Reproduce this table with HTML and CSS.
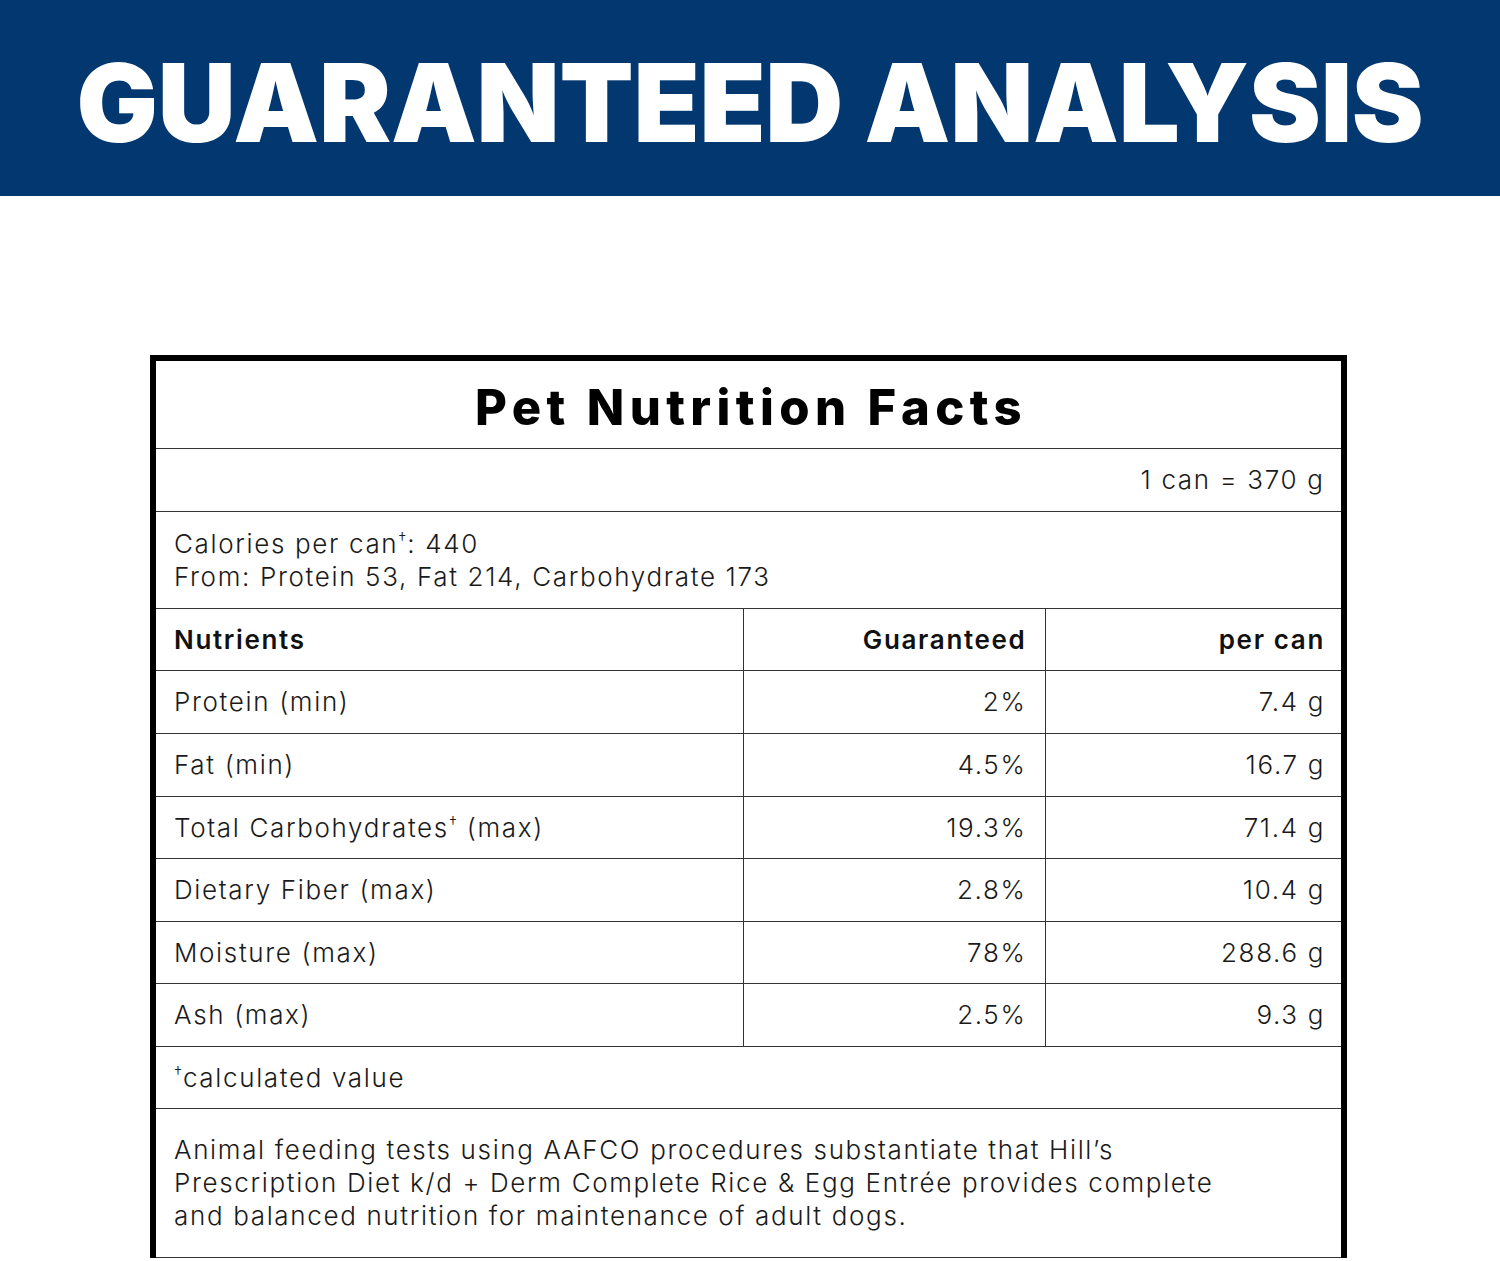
FILE: index.html
```html
<!DOCTYPE html>
<html lang="en">
<head>
<meta charset="utf-8">
<title>Guaranteed Analysis</title>
<link rel="stylesheet" href="styles.css">
</head>
<body>
<header class="banner">
  <h1 class="banner-title">GUARANTEED ANALYSIS</h1>
</header>
<main class="content">
  <table class="facts">
    <colgroup>
      <col class="c1"><col class="c2"><col class="c3">
    </colgroup>
    <tr class="r-title"><th colspan="3" class="title">Pet Nutrition Facts</th></tr>
    <tr class="h63"><td colspan="3" class="right">1 can = 370 g</td></tr>
    <tr class="r-cal"><td colspan="3">Calories per can<sup>†</sup>: 440<br>From: Protein 53, Fat 214, Carbohydrate 173</td></tr>
    <tr class="h62 head"><th class="left">Nutrients</th><th class="right">Guaranteed</th><th class="right">per can</th></tr>
    <tr class="h63"><td>Protein (min)</td><td class="right">2%</td><td class="right">7.4 g</td></tr>
    <tr class="h63"><td>Fat (min)</td><td class="right">4.5%</td><td class="right">16.7 g</td></tr>
    <tr class="h62"><td>Total Carbohydrates<sup>†</sup> (max)</td><td class="right">19.3%</td><td class="right">71.4 g</td></tr>
    <tr class="h63"><td>Dietary Fiber (max)</td><td class="right">2.8%</td><td class="right">10.4 g</td></tr>
    <tr class="h62"><td>Moisture (max)</td><td class="right">78%</td><td class="right">288.6 g</td></tr>
    <tr class="h63"><td>Ash (max)</td><td class="right">2.5%</td><td class="right">9.3 g</td></tr>
    <tr class="h62"><td colspan="3"><sup>†</sup>calculated value</td></tr>
    <tr class="r-stmt"><td colspan="3">Animal feeding tests using AAFCO procedures substantiate that Hill’s<br>Prescription Diet k/d + Derm Complete Rice &amp; Egg Entrée provides complete<br>and balanced nutrition for maintenance of adult dogs.</td></tr>
  </table>
</main>
</body>
</html>
```

FILE: styles.css
```css
html, body {
  margin: 0;
  padding: 0;
  background: #ffffff;
}
body {
  width: 1500px;
  font-family: "Inter", "Liberation Sans", sans-serif;
  color: #1a1a1a;
}
.banner {
  height: 196px;
  background: #02386f;
  display: flex;
  align-items: center;
  justify-content: center;
}
.banner-title {
  margin: 0;
  color: #ffffff;
  font-family: "Inter", sans-serif;
  font-weight: 900;
  font-size: 108px;
  line-height: 1;
  letter-spacing: -0.2px;
  padding-top: 10px;
}
.content {
  padding: 159px 0 0 150px;
}
.facts {
  width: 1197px;
  table-layout: fixed;
  border-collapse: collapse;
  border-top: 6px solid #000;
  border-left: 6px solid #000;
  border-right: 6px solid #000;
  border-bottom: 1px solid #333;
}
.c1 { width: 588px; }
.c2 { width: 300px; }
.c3 { width: 297px; }
.facts td, .facts th {
  border-top: 1px solid #333;
  padding: 0 18px;
  font-size: 26px;
  font-weight: 300;
  letter-spacing: 1.65px;
  line-height: 33px;
  text-align: left;
  vertical-align: middle;
}
.facts tr.r-title th { border-top: 0; }
.facts td + td, .facts th + th {
  border-left: 1px solid #333;
}
.facts .right { text-align: right; padding-right: 18px; }
.facts td + td.right, .facts th + th.right { padding-right: 18.5px; }
.facts td + td + td.right, .facts th + th + th.right { padding-right: 16px; }
.facts td[colspan].right { padding-right: 16.5px; }
.r-title { height: 90px; }
.h62 { height: 62px; }
.h63 { height: 63px; }
.r-cal { height: 97px; }
.r-stmt { height: 149px; }
.facts th.title {
  text-align: center;
  font-size: 49px;
  font-weight: 800;
  letter-spacing: 5.4px;
  color: #000;
  padding-top: 6px;
  padding-left: 23px;
}
.head th {
  font-weight: 600;
  color: #111;
}
sup {
  font-size: 0.62em;
  vertical-align: 0;
  position: relative;
  top: -0.55em;
  line-height: 0;
  letter-spacing: 0;
  margin-right: 1px;
}
```
